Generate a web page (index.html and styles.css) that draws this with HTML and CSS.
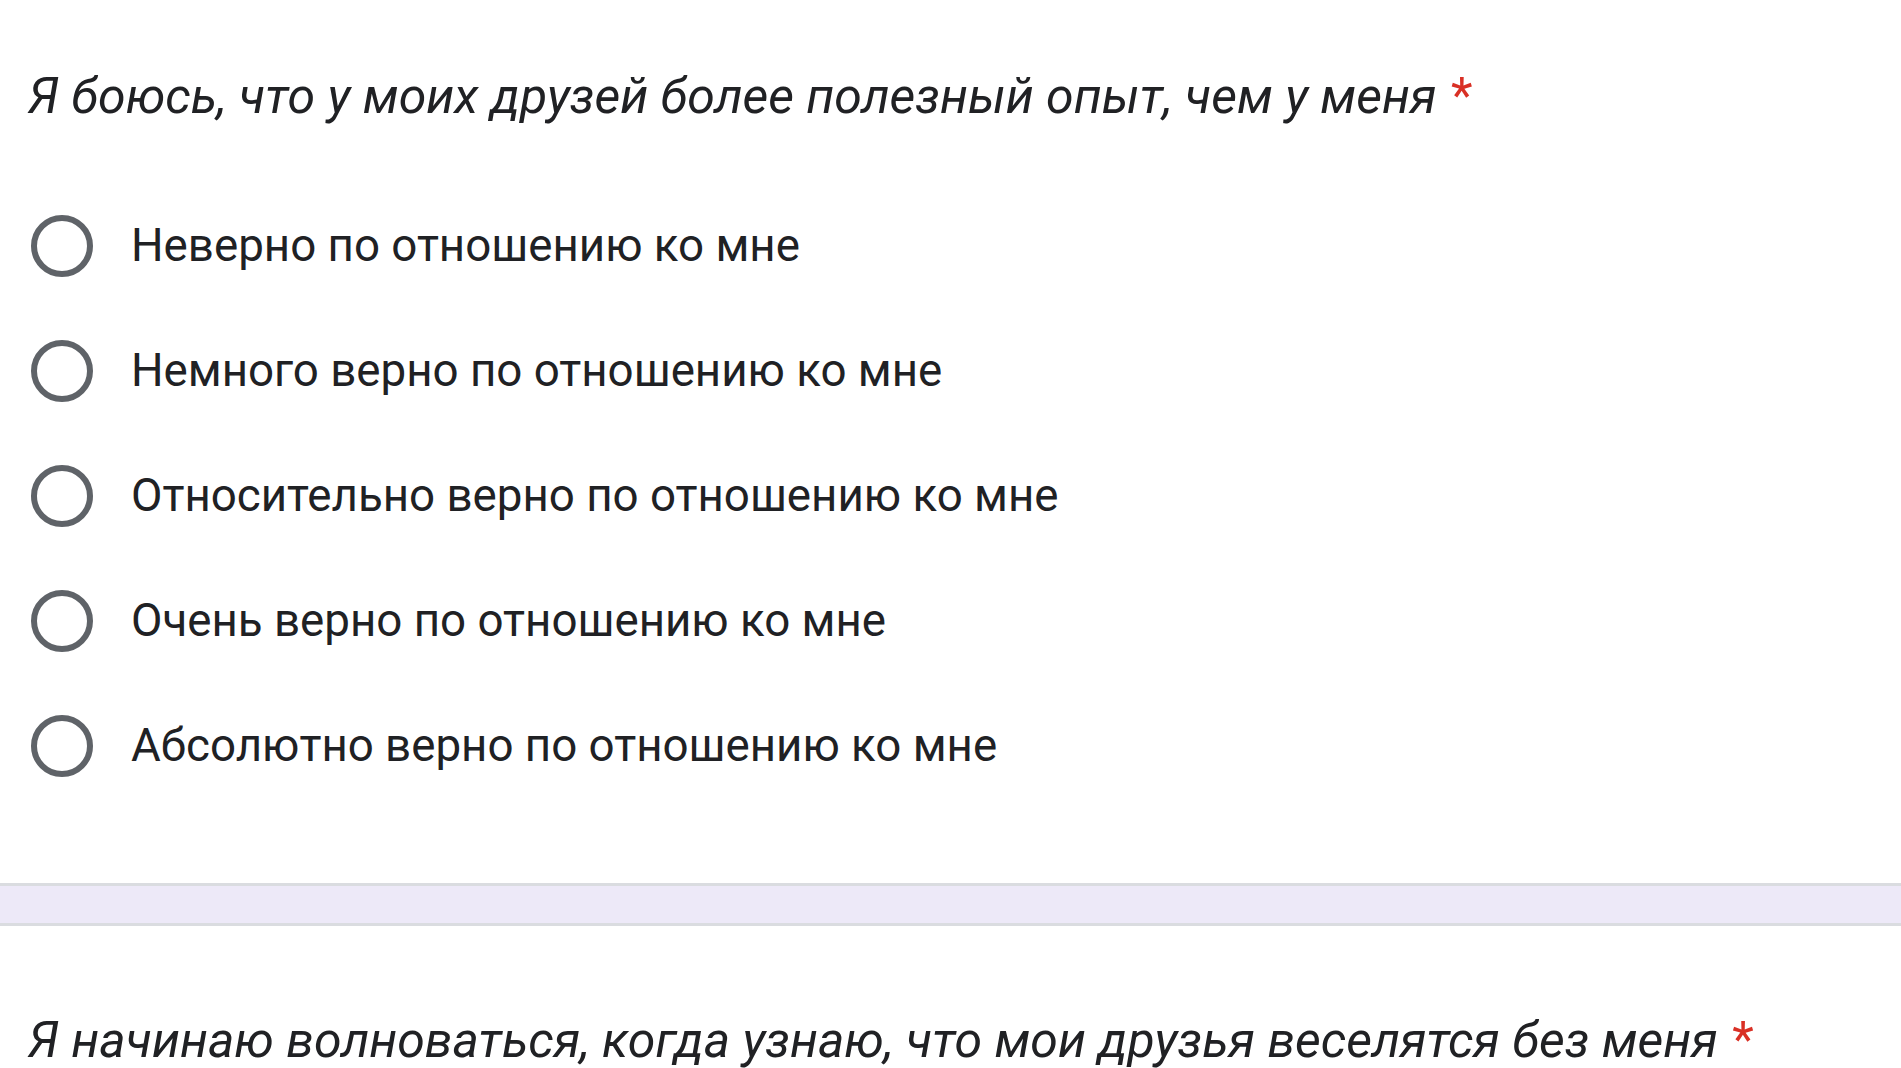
FILE: index.html
```html
<!DOCTYPE html>
<html lang="ru">
<head>
<meta charset="utf-8">
<title>Форма</title>
<link rel="stylesheet" href="styles.css">
</head>
<body>
<section class="question first">
  <div class="q-title">Я боюсь, что у моих друзей более полезный опыт, чем у меня<span class="req"> *</span></div>
  <div class="options">
    <label class="option"><span class="radio"></span><span class="label">Неверно по отношению ко мне</span></label>
    <label class="option"><span class="radio"></span><span class="label">Немного верно по отношению ко мне</span></label>
    <label class="option"><span class="radio"></span><span class="label">Относительно верно по отношению ко мне</span></label>
    <label class="option"><span class="radio"></span><span class="label">Очень верно по отношению ко мне</span></label>
    <label class="option"><span class="radio"></span><span class="label">Абсолютно верно по отношению ко мне</span></label>
  </div>
</section>
<div class="divider"></div>
<section class="question second">
  <div class="q-title">Я начинаю волноваться, когда узнаю, что мои друзья веселятся без меня<span class="req"> *</span></div>
</section>
</body>
</html>
```
FILE: styles.css
```css
html, body {
  margin: 0;
  padding: 0;
  background: #ffffff;
  overflow: hidden;
}
body {
  font-family: Roboto, "Liberation Sans", sans-serif;
  color: #202124;
}
.question {
  padding: 0 24px;
}
.question.first {
  padding-top: 66px;
  padding-bottom: 75px;
}
.question.second {
  padding-top: 84px;
}
.q-title {
  font-size: 50px;
  line-height: 60px;
  font-style: italic;
  white-space: nowrap;
  padding-left: 4px;
}
.req {
  color: #d93025;
  font-style: normal;
  margin-left: 2px;
}
.options {
  margin-top: 57px;
  display: flex;
  flex-direction: column;
}
.option {
  display: flex;
  align-items: center;
  height: 125px;
}
.radio {
  box-sizing: border-box;
  width: 62px;
  height: 62px;
  border: 6px solid #5f6368;
  border-radius: 50%;
  margin-left: 7px;
  margin-right: 38px;
  flex: none;
}
.label {
  font-size: 45.7px;
  line-height: 60px;
  white-space: nowrap;
}
.divider {
  height: 37px;
  background: #ede9f8;
  border-top: 3px solid #dadce0;
  border-bottom: 3px solid #dadce0;
}
```
